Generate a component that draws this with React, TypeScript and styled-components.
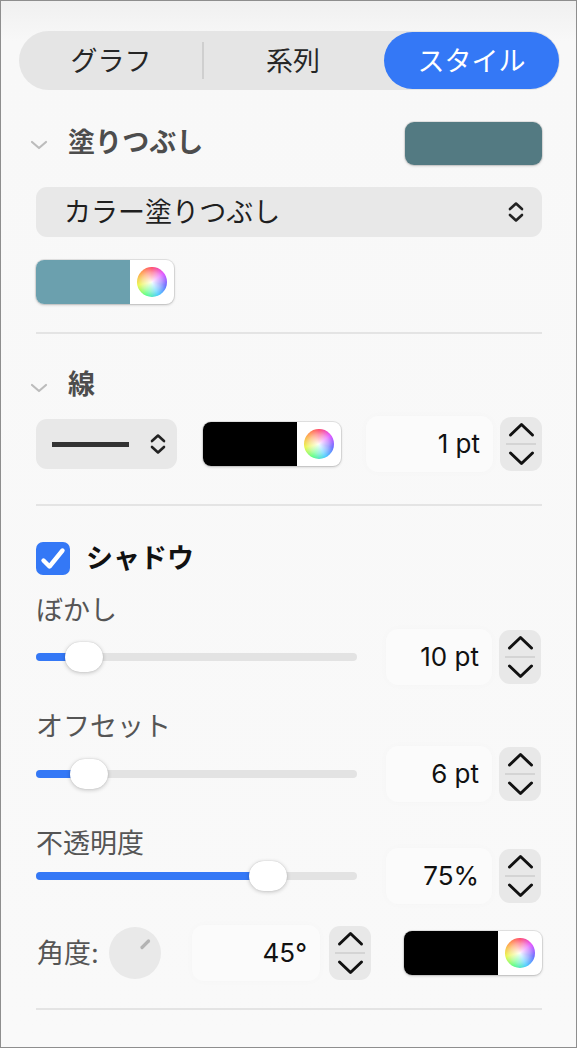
import React from 'react'
import styled, { createGlobalStyle } from 'styled-components'

const font = `"Inter", "Noto Sans CJK JP", sans-serif`
const blue = '#3478f6'

const GlobalStyle = createGlobalStyle`
  html, body {
    margin: 0;
    padding: 0;
    background: #ffffff;
  }
  * {
    box-sizing: border-box;
  }
`

type SliderData = {
  label: string
  value: string
  thumb: number
  labelTop: number
  rowTop: number
}

const sliders: SliderData[] = [
  { label: 'ぼかし', value: '10 pt', thumb: 29, labelTop: 22, rowTop: 4 },
  { label: 'オフセット', value: '6 pt', thumb: 34, labelTop: 28, rowTop: 5 },
  { label: '不透明度', value: '75%', thumb: 213, labelTop: 28, rowTop: -10 },
]

export default function App() {
  return (
    <>
      <GlobalStyle />
      <Panel>
        <Segmented>
          <Segment>グラフ</Segment>
          <Segment $divider>系列</Segment>
          <Segment $active>スタイル</Segment>
        </Segmented>

        <HeaderRow $top={32} $height={43}>
          <Disclosure>
            <Chevron />
            <SectionTitle>塗りつぶし</SectionTitle>
          </Disclosure>
          <Swatch $color="#537a82" />
        </HeaderRow>

        <Popup $top={22}>
          <PopupText>カラー塗りつぶし</PopupText>
          <UpDown />
        </Popup>

        <WellRow $top={23}>
          <ColorWell $color="#6ba0ae" />
        </WellRow>

        <Divider $top={28} />

        <HeaderRow $top={37} $height={30}>
          <Disclosure>
            <Chevron />
            <SectionTitle>線</SectionTitle>
          </Disclosure>
        </HeaderRow>

        <ControlRow $top={15}>
          <LinePopup>
            <LineSample />
            <UpDown />
          </LinePopup>
          <ColorWell $color="#000000" $gap={26} />
          <NumberField $width={127} $gap={25}>1 pt</NumberField>
          <Stepper />
        </ControlRow>

        <Divider $top={32} />

        <CheckRow>
          <Checkbox>
            <svg width="34" height="33" viewBox="0 0 34 33">
              <path d="M7.5 18.5 L13.5 24.5 L26.5 8.5" fill="none" stroke="#fff" strokeWidth="4.4" strokeLinecap="round" strokeLinejoin="round" />
            </svg>
          </Checkbox>
          <CheckLabel>シャドウ</CheckLabel>
        </CheckRow>

        {sliders.map((s) => (
          <React.Fragment key={s.label}>
            <FieldLabel $top={s.labelTop}>{s.label}</FieldLabel>
            <ControlRow $top={s.rowTop}>
              <Track>
                <Fill style={{ width: s.thumb + 19 }} />
                <Thumb style={{ left: s.thumb }} />
              </Track>
              <NumberField $width={106} $gap={29}>{s.value}</NumberField>
              <Stepper />
            </ControlRow>
          </React.Fragment>
        ))}

        <ControlRow $top={21}>
          <AngleLabel>角度:</AngleLabel>
          <Dial>
            <svg width="52" height="52" viewBox="0 0 52 52">
              <line x1="39.5" y1="14" x2="33" y2="20.5" stroke="#b3b3b3" strokeWidth="3.2" strokeLinecap="round" />
            </svg>
          </Dial>
          <NumberField $width={128} $gap={31}>45°</NumberField>
          <Stepper $gap={9} />
          <ColorWell $color="#000000" $gap={33} />
        </ControlRow>

        <Divider $top={27} />
      </Panel>
    </>
  )
}

function Chevron() {
  return (
    <ChevronBox>
      <svg width="18" height="10" viewBox="0 0 18 10">
        <path d="M2 2 L9 8 L16 2" fill="none" stroke="#bcbcbc" strokeWidth="2.2" strokeLinecap="round" strokeLinejoin="round" />
      </svg>
    </ChevronBox>
  )
}

function UpDown() {
  return (
    <svg width="18" height="22" viewBox="0 0 18 22">
      <path d="M3 8 L9 2.5 L15 8" fill="none" stroke="#222" strokeWidth="2.6" strokeLinecap="round" strokeLinejoin="round" />
      <path d="M3 14 L9 19.5 L15 14" fill="none" stroke="#222" strokeWidth="2.6" strokeLinecap="round" strokeLinejoin="round" />
    </svg>
  )
}

function ColorWell({ $color, $gap = 0 }: { $color: string; $gap?: number }) {
  return (
    <Well $gap={$gap}>
      <WellColor $color={$color} />
      <WellWheelBox>
        <Wheel />
      </WellWheelBox>
    </Well>
  )
}

function Stepper({ $gap = 7 }: { $gap?: number }) {
  return (
    <StepperBox $gap={$gap}>
      <StepHalf>
        <svg width="27" height="16" viewBox="0 0 27 16">
          <path d="M2.5 13 L13.5 2.5 L24.5 13" fill="none" stroke="#111" strokeWidth="3" strokeLinecap="round" strokeLinejoin="round" />
        </svg>
      </StepHalf>
      <StepRule />
      <StepHalf>
        <svg width="27" height="16" viewBox="0 0 27 16">
          <path d="M2.5 3 L13.5 13.5 L24.5 3" fill="none" stroke="#111" strokeWidth="3" strokeLinecap="round" strokeLinejoin="round" />
        </svg>
      </StepHalf>
    </StepperBox>
  )
}

const Panel = styled.div`
  width: 577px;
  height: 1048px;
  border: 1px solid #8e8e8e;
  background: linear-gradient(#f0f0f0 0px, #f8f8f8 40px, #f9f9f9 100%);
  padding: 30px 34px 0 35px;
  display: flex;
  flex-direction: column;
  font-family: ${font};
  overflow: hidden;
`

const Segmented = styled.div`
  display: grid;
  grid-template-columns: 182px 182px 1fr;
  height: 59px;
  margin: 0 -18px 0 -17px;
  padding: 1px;
  border-radius: 30px;
  background: #e5e5e5;
`

const Segment = styled.div<{ $active?: boolean; $divider?: boolean }>`
  position: relative;
  display: flex;
  align-items: center;
  justify-content: center;
  font-size: 27px;
  line-height: 1;
  color: ${(p) => (p.$active ? '#ffffff' : '#262626')};
  background: ${(p) => (p.$active ? blue : 'transparent')};
  border-radius: 29px;
  padding-top: 2px;

  &::before {
    content: '';
    display: ${(p) => (p.$divider ? 'block' : 'none')};
    position: absolute;
    left: 0;
    top: 10px;
    bottom: 10px;
    width: 2px;
    background: #cfcfcf;
  }
`

const HeaderRow = styled.div<{ $top: number; $height: number }>`
  display: flex;
  align-items: center;
  justify-content: space-between;
  margin-top: ${(p) => p.$top}px;
  height: ${(p) => p.$height}px;
`

const Disclosure = styled.div`
  display: flex;
  align-items: center;
  margin-left: -6px;
  margin-top: -3px;
`

const ChevronBox = styled.div`
  width: 18px;
  height: 10px;
  display: flex;
  margin-right: 20px;
  margin-top: 6px;

  svg {
    display: block;
  }
`

const SectionTitle = styled.div`
  font-size: 27px;
  font-weight: 700;
  line-height: 1;
  color: #4d4d4d;
`

const Swatch = styled.div<{ $color: string }>`
  width: 137px;
  height: 43px;
  border-radius: 9px;
  background: ${(p) => p.$color};
  box-shadow: 0 0 0 1px rgba(0, 0, 0, 0.08), 0 1px 3px rgba(0, 0, 0, 0.18);
`

const Popup = styled.div<{ $top: number }>`
  display: flex;
  align-items: center;
  justify-content: space-between;
  height: 50px;
  margin-top: ${(p) => p.$top}px;
  padding: 0 17px 0 28px;
  background: #e8e8e8;
  border-radius: 11px;

  svg {
    display: block;
  }
`

const PopupText = styled.div`
  font-size: 27px;
  line-height: 1;
  color: #1f1f1f;
`

const WellRow = styled.div<{ $top: number }>`
  display: flex;
  margin-top: ${(p) => p.$top}px;
`

const Well = styled.div<{ $gap: number }>`
  display: flex;
  width: 138px;
  height: 44px;
  margin-left: ${(p) => p.$gap}px;
  border-radius: 8px;
  overflow: hidden;
  background: #ffffff;
  box-shadow: 0 0 0 1px rgba(0, 0, 0, 0.08), 0 1px 3px rgba(0, 0, 0, 0.2);
  flex-shrink: 0;
`

const WellColor = styled.div<{ $color: string }>`
  width: 94px;
  height: 100%;
  background: ${(p) => p.$color};
`

const WellWheelBox = styled.div`
  flex: 1;
  display: flex;
  align-items: center;
  justify-content: center;
`

const Wheel = styled.div`
  width: 30px;
  height: 30px;
  border-radius: 50%;
  background: radial-gradient(circle, rgba(255, 255, 255, 0.95) 0%, rgba(255, 255, 255, 0.45) 45%, rgba(255, 255, 255, 0) 75%),
    conic-gradient(#ff3b5c, #e040ff, #5a5cff, #36c8ff, #4cff7a, #e8f53a, #ff9a3a, #ff3b5c);
`

const Divider = styled.div<{ $top: number }>`
  height: 2px;
  background: #e4e4e4;
  margin-top: ${(p) => p.$top}px;
  flex-shrink: 0;
`

const ControlRow = styled.div<{ $top: number }>`
  display: flex;
  align-items: center;
  margin-top: ${(p) => p.$top}px;
  height: 56px;
  flex-shrink: 0;
`

const LinePopup = styled.div`
  display: flex;
  align-items: center;
  justify-content: space-between;
  width: 141px;
  height: 50px;
  padding: 0 10px 0 16px;
  background: #e8e8e8;
  border-radius: 11px;
  flex-shrink: 0;

  svg {
    display: block;
  }
`

const LineSample = styled.div`
  width: 77px;
  height: 5px;
  background: #333333;
`

const NumberField = styled.div<{ $width: number; $gap: number }>`
  display: flex;
  align-items: center;
  justify-content: flex-end;
  width: ${(p) => p.$width}px;
  height: 56px;
  margin-left: ${(p) => p.$gap}px;
  padding-right: 13px;
  border-radius: 12px;
  background: #fbfbfb;
  box-shadow: 0 0 10px rgba(0, 0, 0, 0.02);
  font-size: 26px;
  line-height: 1;
  color: #111111;
  flex-shrink: 0;
`

const StepperBox = styled.div<{ $gap: number }>`
  display: flex;
  flex-direction: column;
  align-items: center;
  width: 42px;
  height: 54px;
  margin-left: ${(p) => p.$gap}px;
  border-radius: 11px;
  background: #e8e8e8;
  flex-shrink: 0;
`

const StepHalf = styled.div`
  flex: 1;
  display: flex;
  align-items: center;
  justify-content: center;

  svg {
    display: block;
  }
`

const StepRule = styled.div`
  width: 30px;
  height: 2px;
  background: #d4d4d4;
`

const CheckRow = styled.div`
  display: flex;
  align-items: center;
  margin-top: 35px;
  height: 34px;
`

const Checkbox = styled.div`
  width: 34px;
  height: 33px;
  border-radius: 7px;
  background: ${blue};
  margin-right: 16px;

  svg {
    display: block;
  }
`

const CheckLabel = styled.div`
  font-size: 27px;
  font-weight: 700;
  line-height: 1;
  color: #111111;
`

const FieldLabel = styled.div<{ $top: number }>`
  font-size: 27px;
  line-height: 28px;
  height: 28px;
  color: #555555;
  margin-top: ${(p) => p.$top}px;
  flex-shrink: 0;
`

const Track = styled.div`
  position: relative;
  width: 321px;
  height: 8px;
  border-radius: 4px;
  background: #e3e3e3;
  flex-shrink: 0;
`

const Fill = styled.div`
  height: 100%;
  border-radius: 4px;
  background: ${blue};
`

const Thumb = styled.div`
  position: absolute;
  top: -11px;
  width: 38px;
  height: 30px;
  border-radius: 15px;
  background: #ffffff;
  box-shadow: 0 1px 4px rgba(0, 0, 0, 0.22), 0 0 1px rgba(0, 0, 0, 0.2);
`

const AngleLabel = styled.div`
  font-size: 27px;
  line-height: 1;
  color: #555555;
  width: 73px;
  padding-left: 1px;
  flex-shrink: 0;
`

const Dial = styled.div`
  width: 52px;
  height: 52px;
  border-radius: 50%;
  background: #e9e9e9;
  flex-shrink: 0;

  svg {
    display: block;
  }
`
